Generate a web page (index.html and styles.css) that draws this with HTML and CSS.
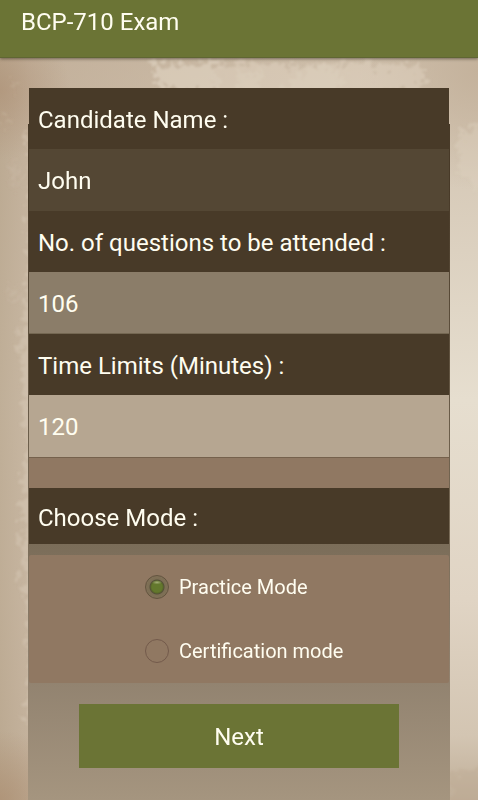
FILE: index.html
```html
<!DOCTYPE html>
<html lang="en">
<head>
    <meta charset="UTF-8">
    <meta name="viewport" content="width=device-width, initial-scale=1.0">
    <title>BCP-710 Exam</title>
    <link rel="stylesheet" href="styles.css">
</head>
<body>

<!-- Worn paper behind the form -->
<svg class="paper" viewBox="0 0 478 800" preserveAspectRatio="none" aria-hidden="true">
    <defs>
        <filter id="rough" x="-20%" y="-20%" width="140%" height="140%">
            <feTurbulence type="fractalNoise" baseFrequency="0.14" numOctaves="5" seed="4" result="noise"/>
            <feDisplacementMap in="SourceGraphic" in2="noise" scale="30" xChannelSelector="R" yChannelSelector="G"/>
            <feGaussianBlur stdDeviation="0.8"/>
        </filter>
    </defs>
    <g fill="#dfd2c0" filter="url(#rough)">
        <path opacity="0.65" d="M152 62L180 66L216 64L218 92L165 92L158 80Z"/>
        <path opacity="0.5" d="M216 66L250 62L300 66L350 62L424 68L426 84L400 94L216 96Z"/>
        <path opacity="0.4" d="M240 74L262 70L258 94L232 94Z"/>
        <path opacity="0.4" d="M310 66L345 72L340 94L280 94Z"/>
        <path opacity="0.4" d="M458 132L490 126L490 200L470 180L458 170Z"/>
        <path opacity="0.35" d="M29 130L36 130L36 730L26 718L30 640L24 590L22 520L27 440L20 340L27 300L30 220Z"/>
        <path opacity="0.2" d="M12 80L18 82L15 92L10 88Z"/>
        <path opacity="0.2" d="M4 112L10 116L8 124L2 118Z"/>
        <path opacity="0.15" d="M14 160L20 170L18 190L10 182Z"/>
        <path opacity="0.15" d="M10 285L18 290L14 302L8 298Z"/>
    </g>
    <path fill="#bda992" opacity="0.4" filter="url(#rough)" d="M450 772L490 768L490 812L450 812Z"/>
</svg>

<header class="title-bar">
    <h1>BCP-710 Exam</h1>
</header>

<form class="exam-form">
    <label class="row" for="candidate">Candidate Name :</label>
    <input class="row field field-name" type="text" id="candidate" name="candidate" value="John">

    <label class="row" for="questions">No. of questions to be attended :</label>
    <input class="row field field-questions" type="text" id="questions" name="questions" value="106">

    <label class="row" for="minutes">Time Limits (Minutes) :</label>
    <input class="row field field-minutes" type="text" id="minutes" name="minutes" value="120">

    <div class="spacer"></div>

    <h2 class="row mode-title" id="modeTitle">Choose Mode :</h2>
    <div class="modes" role="radiogroup" aria-labelledby="modeTitle">
        <label class="mode"><input type="radio" name="mode" value="practice" checked> Practice Mode</label>
        <label class="mode"><input type="radio" name="mode" value="certification"> Certification mode</label>
    </div>

    <button class="btn" type="button">Next</button>
</form>

</body>
</html>
```

FILE: styles.css
```css
* {
    box-sizing: border-box;
}
body {
    margin: 0;
    min-height: 100vh;
    display: flex;
    flex-direction: column;
    position: relative;
    font-family: Roboto, "Liberation Sans", sans-serif;
    font-size: 24px;
    color: #fffdf0;
    background:
        radial-gradient(circle at 0 90px, rgba(172, 142, 115, 0.6), rgba(172, 142, 115, 0) 70px),
        radial-gradient(circle at 0 100%, rgba(172, 142, 113, 0.7), rgba(172, 142, 113, 0) 70px),
        radial-gradient(circle at 100% 70px, #c4b29c, rgba(196, 178, 156, 0) 120px),
        linear-gradient(to right, rgba(182, 163, 138, 0.8), rgba(192, 173, 151, 0.8) 28px, rgba(200, 183, 163, 0) 80%),
        linear-gradient(#c9b8a3, #d6c9b7 20%, #e6decf 50%, #e0d4c4 75%, #d3c5b2 92%, #bfae98);
}
.paper {
    position: absolute;
    top: 0;
    left: 0;
    width: 100%;
    height: 100%;
    z-index: -1;
}
h1, h2 {
    margin: 0;
    font-size: 24px;
    font-weight: 400;
}
.title-bar {
    height: 58px;
    padding: 8px 21px;
    line-height: 28px;
    background-color: #6b7435;
    border-bottom: 1px solid #5f6633;
    box-shadow: 0 1px 3px rgba(60, 50, 35, 0.6);
}
.exam-form {
    flex: 1;
    display: flex;
    flex-direction: column;
    margin: 30px 28px 0;
    padding: 0 1px 32px;
    background: linear-gradient(transparent 36px, #483a28 36px, #483a28 100px, #7b6d59 456px, #928370 594px, #a5957f 712px);
}
.row {
    height: 61px;
    padding: 2px 9px 0;
    line-height: 60px;
    background-color: #483a28;
}
.field {
    width: 100%;
    height: 62px;
    border: none;
    border-radius: 0;
    font: inherit;
    color: inherit;
}
.field-name {
    background-color: #544734;
}
.field-questions {
    background-color: #8b7d69;
    border-bottom: 1px solid #746752;
}
.field-minutes {
    height: 63px;
    background-color: #b6a691;
    border-bottom: 1px solid #75614c;
}
.spacer {
    height: 30px;
    background-color: #907862;
}
.mode-title {
    height: 56px;
    line-height: 56px;
}
.modes {
    margin-top: 11px;
    padding-left: 116px;
    background-color: #907862;
    border-radius: 2px;
}
.mode {
    display: flex;
    align-items: center;
    gap: 10px;
    height: 64px;
    font-size: 20px;
}
.mode input {
    appearance: none;
    width: 24px;
    height: 24px;
    margin: 0;
    border: 1px solid #735a4b;
    border-radius: 50%;
}
.mode input:checked {
    border-color: #63543f;
    background:
        radial-gradient(ellipse 5px 2px at 50% 29%, rgba(190, 196, 150, 0.7), transparent),
        radial-gradient(circle at 50% 50%, #63782d 5px, #5a6a29 6px, #555039 7px, #7c6e54 8px, #86745b);
}
.btn {
    width: 76%;
    height: 64px;
    margin: 21px auto 0;
    padding: 2px 0 0;
    border: none;
    font: inherit;
    color: inherit;
    background-color: #6b7435;
    cursor: pointer;
}
```
